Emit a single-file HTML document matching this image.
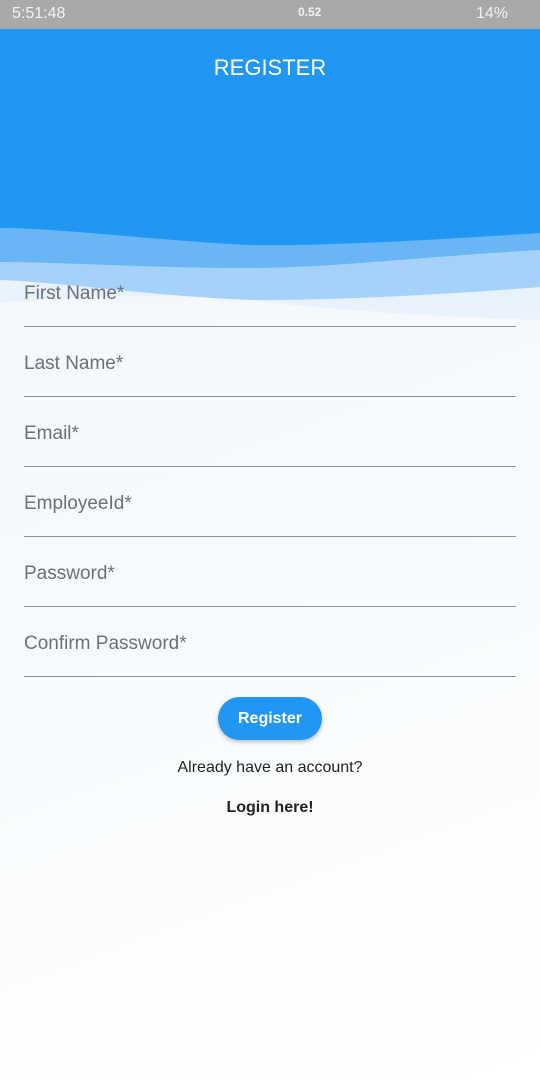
<!DOCTYPE html>
<html><head><meta charset="utf-8"><style>
*{margin:0;padding:0;box-sizing:border-box}
body{width:540px;height:1080px;overflow:hidden;font-family:"Liberation Sans",sans-serif;background:linear-gradient(160deg,#f1f6fb 0%,#f8fbfd 60%,#fff 100%);position:relative}
.sb{position:absolute;top:0;left:0;width:540px;height:29px;background:#a9a9a9;color:#f2f2f2;font-size:16px}
.sb span{position:absolute;top:5px}
.hdr{position:absolute;top:29px;left:0;width:540px;height:300px}
.title{position:absolute;top:55px;width:540px;text-align:center;color:#fff;font-size:22px}
.f{position:absolute;left:24px;width:492px;border-bottom:1.5px solid #8e9399;height:44px;color:#6c7077;font-size:19px}
.btn{position:absolute;left:218px;top:697px;width:104px;height:43px;border-radius:22px;background:#2196f3;color:#fff;font-size:16px;font-weight:bold;text-align:center;line-height:43px;box-shadow:0 2px 4px rgba(0,0,0,.25)}
.t{position:absolute;width:540px;text-align:center;color:#222;font-size:16px}
</style></head><body>
<div class="hdr"><svg width="540" height="300" viewBox="0 29 540 300">
<defs><linearGradient id="g" x1="0" y1="0" x2="0" y2="1"><stop offset="0" stop-color="#d4e8fb"/><stop offset="1" stop-color="#eaf3fc"/></linearGradient></defs>
<path d="M0 29H540V320C420 316 330 310 250 300C150 292 60 298 0 303Z" fill="url(#g)"/>
<path d="M0 29H540V287C430 296 330 300 250 300C150 296 60 282 0 280Z" fill="#a6d2f9"/>
<path d="M0 29H540V250C430 256 330 268 250 268C150 268 60 262 0 262Z" fill="#6ab5f4"/>
<path d="M0 29H540V233C430 240 330 246 250 245C150 240 60 228 0 228Z" fill="#2196f3"/>
</svg></div>
<div class="sb"><span style="left:12px">5:51:48</span><span style="left:298px;font-size:12px;font-weight:bold">0.52</span><span style="left:476px">14%</span></div>
<div class="title">REGISTER</div>
<div class="f" style="top:283px">First Name*</div>
<div class="f" style="top:353px">Last Name*</div>
<div class="f" style="top:423px">Email*</div>
<div class="f" style="top:493px">EmployeeId*</div>
<div class="f" style="top:563px">Password*</div>
<div class="f" style="top:633px">Confirm Password*</div>
<div class="btn">Register</div>
<div class="t" style="top:759px">Already have an account?</div>
<div class="t" style="top:799px;font-weight:bold">Login here!</div>
</body></html>
